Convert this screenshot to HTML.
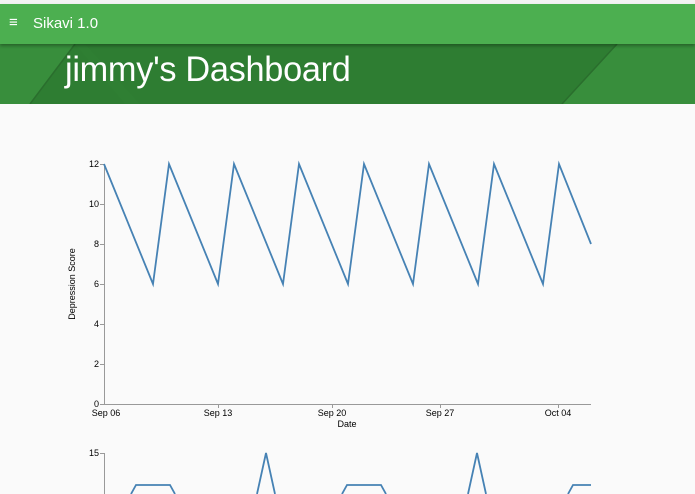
<!DOCTYPE html>
<html><head><style>
body{margin:0;width:695px;height:494px;overflow:hidden;background:#fafafa;font-family:"Liberation Sans",Arial,sans-serif;position:relative}
.top{position:absolute;left:0;top:0;width:695px;height:4px;background:#f3f3f3}
.nav{position:absolute;left:0;top:4px;width:695px;height:40px;background:#4caf50;color:#fff;box-shadow:0 2px 3px rgba(0,0,0,.3);z-index:2}
.nav .t{position:absolute;left:33px;top:11px;font-size:15px}
.nav .m{position:absolute;left:9px;top:10px;font-size:15px;font-weight:bold}
.hdr{position:absolute;left:0;top:44px;width:695px;height:60px}
.hdr h1{position:absolute;left:65px;top:6px;margin:0;font-weight:300;font-size:35px;color:#fff;font-family:"Liberation Sans",sans-serif;letter-spacing:-0.3px;transform:scaleX(0.98);transform-origin:left}
</style></head><body>
<div class="top"></div>
<div class="nav"><span class="m">&#8801;</span><span class="t">Sikavi 1.0</span></div>
<div class="hdr">
<svg width="695" height="60" style="position:absolute;left:0;top:0">
<rect width="695" height="60" fill="#2e7d32"/>
<polygon points="0,0 75,0 30,60 0,60" fill="#388e3c"/>
<polygon points="75,0 85,0 140,60 125,60" fill="#2f7f33"/>
<polygon points="617,0 695,0 695,60 562,60" fill="#388e3c"/>
<line x1="75" y1="0" x2="30" y2="60" stroke="#2a6e2d" stroke-width="1.5"/>
<line x1="617" y1="0" x2="562" y2="60" stroke="#2a6e2d" stroke-width="1.5"/>
</svg>
<h1>jimmy's Dashboard</h1>
</div>
<svg width="695" height="390" style="position:absolute;left:0;top:104px" font-family="Liberation Sans,Arial,sans-serif" font-size="9" fill="#000">
<g transform="translate(0,-104)">
<g stroke="#999" stroke-width="1" fill="none">
<line x1="104.5" y1="164" x2="104.5" y2="404"/>
<line x1="104" y1="404.5" x2="591" y2="404.5"/>
<line x1="100" y1="164.5" x2="104" y2="164.5"/><line x1="100" y1="204.5" x2="104" y2="204.5"/><line x1="100" y1="244.5" x2="104" y2="244.5"/><line x1="100" y1="284.5" x2="104" y2="284.5"/><line x1="100" y1="324.5" x2="104" y2="324.5"/><line x1="100" y1="364.5" x2="104" y2="364.5"/><line x1="100" y1="404.5" x2="104" y2="404.5"/>
<line x1="218.5" y1="404" x2="218.5" y2="408"/><line x1="332.5" y1="404" x2="332.5" y2="408"/><line x1="440.5" y1="404" x2="440.5" y2="408"/><line x1="558.5" y1="404" x2="558.5" y2="408"/>
<line x1="104.5" y1="453" x2="104.5" y2="494"/><line x1="100" y1="453.5" x2="104" y2="453.5"/>
</g>
<g text-anchor="end"><text x="99" y="167">12</text><text x="99" y="207">10</text><text x="99" y="247">8</text><text x="99" y="287">6</text><text x="99" y="327">4</text><text x="99" y="367">2</text><text x="99" y="407">0</text><text x="99" y="456">15</text></g>
<g text-anchor="middle"><text x="106" y="416">Sep 06</text><text x="218" y="416">Sep 13</text><text x="332" y="416">Sep 20</text><text x="440" y="416">Sep 27</text><text x="558" y="416">Oct 04</text><text x="347" y="427">Date</text></g>
<text transform="translate(75,284) rotate(-90)" text-anchor="middle">Depression Score</text>
<polyline fill="none" stroke="#4682b4" stroke-width="1.8" points="104,164 153,284 169,164 218,284 234,164 283,284 299,164 348,284 364,164 413,284 429,164 478,284 494,164 543,284 559,164 591,244"/>
<g fill="none" stroke="#4682b4" stroke-width="1.8">
<polyline points="131,494 136,485 170,485 175,494"/>
<polyline points="257,494 266,453 275,494"/>
<polyline points="342,494 347,485 381,485 386,494"/>
<polyline points="468,494 477,453 486,494"/>
<polyline points="568,494 573,485 591,485"/>
</g>
</g>
</svg>
</body></html>
